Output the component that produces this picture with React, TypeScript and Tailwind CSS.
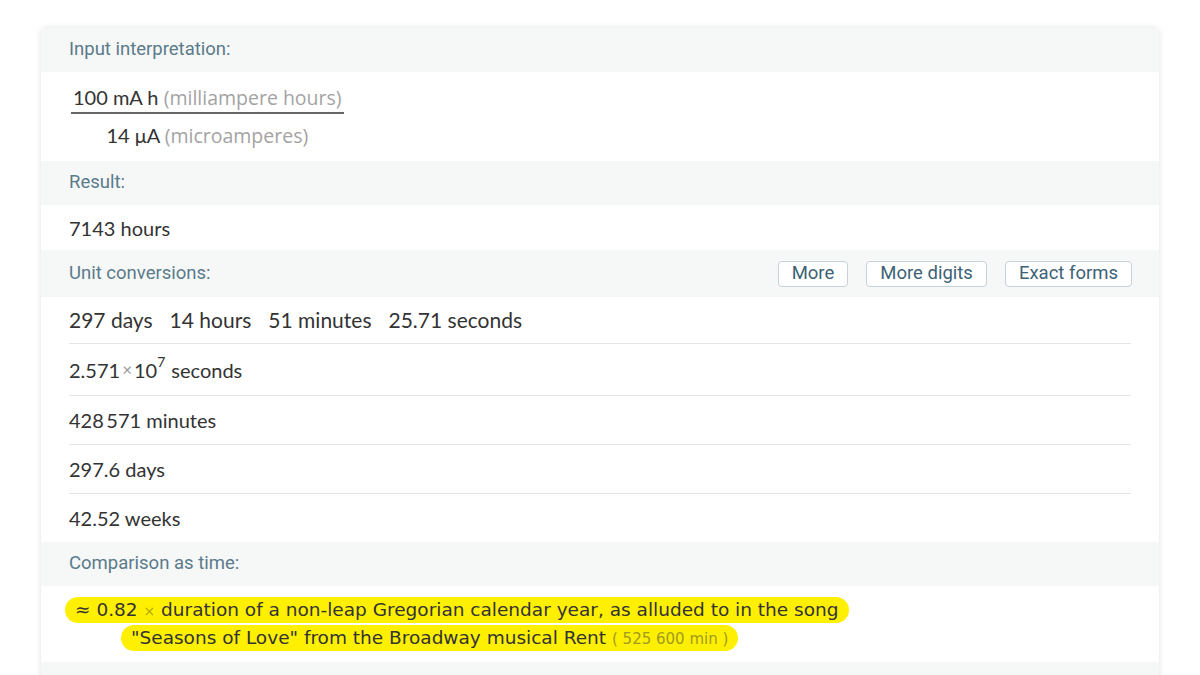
import React from 'react';

const Header: React.FC<{ title: string; tall?: boolean; children?: React.ReactNode }> = ({ title, tall, children }) => (
  <div
    className={`flex items-center justify-between bg-[#f6f7f7] px-7 ${tall ? 'h-[47px]' : 'h-[44px]'} text-[18.5px] text-[#5a7b8b]`}
    style={{ fontFamily: 'Roboto, sans-serif' }}
  >
    <span>{title}</span>
    {children}
  </div>
);

const Btn: React.FC<{ label: string }> = ({ label }) => (
  <button className="h-[26px] px-[13px] rounded-[4px] border border-[#c5d2d9] bg-white text-[18.5px] leading-none text-[#3d6276]">
    {label}
  </button>
);

const rows = [
  { text: '428\u2009571 minutes', h: 'h-[49px]', line: true },
  { text: '297.6 days', h: 'h-[49px]', line: true },
  { text: '42.52 weeks', h: 'h-[48px]', line: false },
];

const App: React.FC = () => {
  return (
    <div className="min-h-screen bg-white pt-[28px] px-[41px]">
      <div className="rounded-t-[6px] overflow-hidden shadow-[0_0_6px_rgba(0,0,0,0.12)] bg-white" style={{ fontFamily: 'Lato, sans-serif' }}>
        <Header title="Input interpretation:" />
        <div className="px-[30px] pt-[12px] pb-[12px] text-[20px] text-[#333] leading-[26px]">
          <div className="inline-flex flex-col items-center">
            <div className="px-[2px] pb-[1px] border-b-2 border-[#666]">
              100 mA h{' '}
              <span className="text-[#a3a3a3] text-[19.5px]" style={{ fontFamily: '"Open Sans", sans-serif' }}>(milliampere hours)</span>
            </div>
            <div className="pt-[8px]">
              14 μA{' '}
              <span className="text-[#a3a3a3] text-[19.5px]" style={{ fontFamily: '"Open Sans", sans-serif' }}>(microamperes)</span>
            </div>
          </div>
        </div>
        <Header title="Result:" />
        <div className="px-7 h-[45px] flex items-center text-[20px] text-[#333]">7143 hours</div>
        <Header title="Unit conversions:" tall>
          <div className="flex gap-[18px] -mr-[1px]">
            <Btn label="More" />
            <Btn label="More digits" />
            <Btn label="Exact forms" />
          </div>
        </Header>
        <div className="px-7 text-[20px] text-[#333]">
          <div className="h-[47px] flex items-center gap-[17px] border-b border-[#e4e4e4] text-[21px]">
            <span>297 days</span>
            <span>14 hours</span>
            <span>51 minutes</span>
            <span>25.71 seconds</span>
          </div>
          <div className="h-[52px] flex items-center border-b border-[#e4e4e4]">
            <span>2.571</span>
            <span className="text-[#999] text-[17px] mx-[2px]">×</span>
            <span>10</span>
            <span className="text-[14px] relative -top-[8px]">7</span>
            <span className="ml-[6px]">seconds</span>
          </div>
          {rows.map((r) => (
            <div key={r.text} className={`${r.h} flex items-center ${r.line ? 'border-b border-[#e4e4e4]' : ''}`}>
              {r.text}
            </div>
          ))}
        </div>
        <Header title="Comparison as time:" />
        <div className="px-[24px] pt-[10px] pb-[10px] text-[18.5px] text-[#333]" style={{ fontFamily: '"DejaVu Sans", sans-serif' }}>
          <div>
            <span className="inline-block bg-[#fef000] rounded-full px-[10px] h-[26px] leading-[26px]">
              ≈ 0.82 <span className="text-[#b0a800] text-[14px]">×</span> duration of a non-leap Gregorian calendar year, as alluded to in the song
            </span>
          </div>
          <div className="pl-[56px]">
            <span className="inline-block bg-[#fef000] rounded-full px-[10px] h-[26px] leading-[26px]">
              "Seasons of Love" from the Broadway musical Rent <span className="text-[#a09a20] text-[15px]">( 525 600 min )</span>
            </span>
          </div>
        </div>
        <div className="bg-[#f6f7f7] h-[20px]" />
      </div>
    </div>
  );
};

export default App;
